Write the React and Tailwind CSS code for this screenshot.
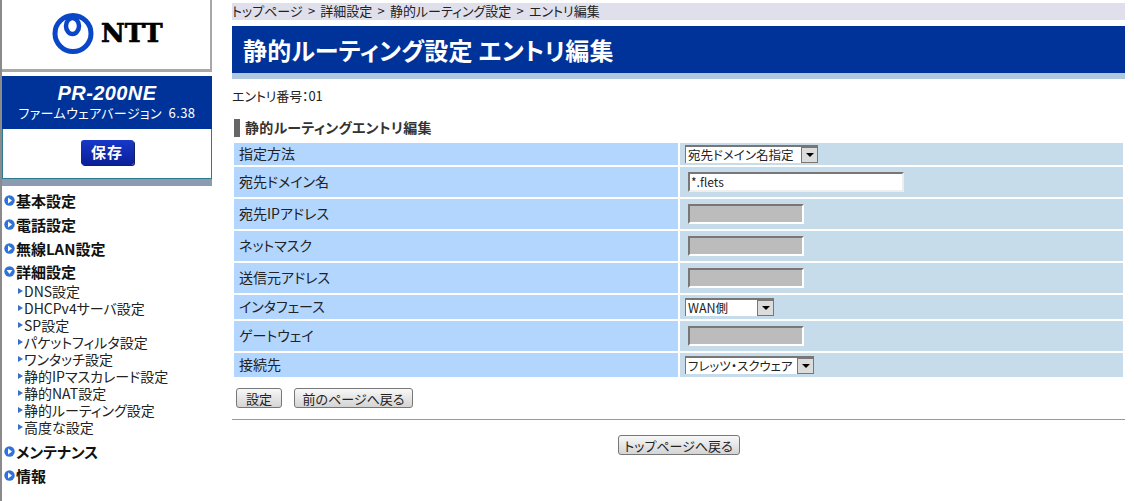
import React from "react";

const font = { fontFamily: '"Noto Sans CJK JP", "Liberation Sans", sans-serif' };

const mainMenu = ["基本設定", "電話設定", "無線LAN設定"];
const subMenu = [
  "DNS設定",
  "DHCPv4サーバ設定",
  "SP設定",
  "パケットフィルタ設定",
  "ワンタッチ設定",
  "静的IPマスカレード設定",
  "静的NAT設定",
  "静的ルーティング設定",
  "高度な設定",
];

function NttLogo() {
  return (
    <div className="flex items-center h-[66px] pl-[50px]">
      <svg width="42" height="41" viewBox="0 0 42 41">
        <circle cx="21" cy="20.5" r="18" fill="none" stroke="#0a46c8" strokeWidth="5" />
        <ellipse cx="20.5" cy="13" rx="6.5" ry="8" fill="none" stroke="#0a46c8" strokeWidth="4.5" />
      </svg>
      <span className="ml-[7px] text-[26px] leading-none font-black text-black [font-family:'DejaVu_Serif',serif] [-webkit-text-stroke:0.7px_black]">
        NTT
      </span>
    </div>
  );
}

function Bullet({ open }) {
  return (
    <svg width="11" height="11" viewBox="0 0 11 11" className="shrink-0">
      <circle cx="5.5" cy="5.5" r="5.2" fill="#2f72d8" />
      {open ? (
        <path d="M2.6 4 L8.4 4 L5.5 8 Z" fill="#fff" />
      ) : (
        <path d="M4 2.6 L8 5.5 L4 8.4 Z" fill="#fff" />
      )}
    </svg>
  );
}

function MainItem({ label, open, className }) {
  return (
    <div className={`flex items-center h-[23.67px] gap-px text-[15px] leading-none font-bold text-[#111] whitespace-nowrap ${className || ""}`}>
      <Bullet open={open} />
      <span>{label}</span>
    </div>
  );
}

function SubItem({ label }) {
  return (
    <div className="flex items-center h-[17px] pl-[14px] text-[14px] leading-none text-[#222] whitespace-nowrap">
      <span className="w-0 h-0 mr-px border-y-[3px] border-y-transparent border-l-[5px] border-l-[#3a70c8]" />
      <span>{label}</span>
    </div>
  );
}

function Sidebar() {
  return (
    <aside className="w-[212px] shrink-0 border-l-2 border-[#8a8a8a] h-[501px]">
      <div className="h-[72px] border-r-2 border-b-[3px] border-[#a8a8a8]">
        <NttLogo />
      </div>
      <div className="mt-1 h-[53px] bg-[#003399] text-white text-center">
        <div className="pt-[6px] text-[20px] leading-[22px] font-bold italic tracking-[0.4px] [font-family:'Liberation_Sans',sans-serif]">
          PR-200NE
        </div>
        <div className="text-[13px] leading-[17px] whitespace-nowrap tracking-[0.4px]">
          ファームウェアバージョン&nbsp;&nbsp;6.38
        </div>
      </div>
      <div className="h-[50px] flex items-center justify-center border-x border-b border-[#2a7a90] pb-[2px]">
        <div className="w-[53px] h-[25px] flex items-center justify-center rounded-[3px] bg-gradient-to-b from-[#1838c8] to-[#0a1f98] text-white text-[15px] font-bold tracking-[1px] shadow-[1px_1px_0_#102060]">
          保存
        </div>
      </div>
      <div className="h-[7px] bg-[#8c9cb0]" />
      <nav className="mt-[3px] pl-[2px]">
        {mainMenu.map((m) => (
          <MainItem key={m} label={m} />
        ))}
        <MainItem label="詳細設定" open />
        <div className="-mt-[1px]">
          {subMenu.map((s) => (
            <SubItem key={s} label={s} />
          ))}
        </div>
        <MainItem label="メンテナンス" className="mt-[4.5px]" />
        <MainItem label="情報" />
      </nav>
    </aside>
  );
}

function Row({ label, rowClass, children }) {
  return (
    <div className={`flex gap-[2px] ${rowClass}`}>
      <div className="w-[444px] bg-[#b3d6ff] flex items-center pl-[5px] pb-[2px] text-[14px] leading-none text-[#222]">{label}</div>
      <div className="w-[443px] bg-[#c6dcea] flex items-center">{children}</div>
    </div>
  );
}

function DisabledInput() {
  return (
    <div className="ml-[8px] w-[116px] h-[20px] bg-[#bcbcbc] border-2 border-t-[#777] border-l-[#777] border-r-white border-b-white" />
  );
}

function Select({ label, width }) {
  return (
    <div className={`ml-[5px] h-[18px] flex items-center justify-between bg-white border-t-2 border-l border-[#777] pl-[2px] text-[12.5px] text-[#222] ${width}`}>
      <span className="whitespace-nowrap leading-none">{label}</span>
      <span className="w-[17px] h-[16px] flex items-center justify-center bg-[#dcdcdc] border border-[#777]">
        <span className="w-0 h-0 border-x-[4px] border-x-transparent border-t-[4px] border-t-black" />
      </span>
    </div>
  );
}

function Btn({ children, className }) {
  return (
    <button className={`h-[20px] flex items-center justify-center rounded-[3px] border border-[#777] bg-gradient-to-b from-[#f8f8f8] to-[#d4d4d4] text-[13px] leading-none text-[#222] ${className}`}>
      {children}
    </button>
  );
}

export default function App() {
  return (
    <div className="flex w-[1134px] h-[501px] bg-white overflow-hidden [font-feature-settings:'palt']" style={font}>
      <Sidebar />
      <main className="ml-5 w-[893px] pt-[3px]">
        <div className="h-[17px] bg-[#e0e0ec] text-[13px] leading-[15px] text-[#222] whitespace-nowrap [word-spacing:2.3px]">
          トップページ &gt; 詳細設定 &gt; 静的ルーティング設定 &gt; エントリ編集
        </div>
        <div className="mt-[6px] h-[47px] bg-[#003399] flex items-center pl-[11px] text-[24px] leading-none font-bold text-white tracking-[0.25px]">
          静的ルーティング設定 エントリ編集
        </div>
        <div className="h-[6px] bg-[#b0c8de]" />
        <div className="mt-[8px] h-[18px] text-[13px] leading-[18px] text-[#222] tracking-[-0.1px]">エントリ番号：01</div>
        <div className="mt-[13px] ml-[2px] h-[20px] flex items-center gap-[5px] text-[14px] leading-none font-bold text-[#333] tracking-[0.3px]">
          <span className="w-[6px] h-[18px] bg-[#666]" />
          <span className="pb-[2px]">静的ルーティングエントリ編集</span>
        </div>
        <div className="mt-[5px] ml-[2px] flex flex-col gap-[2px]">
          <Row label="指定方法" rowClass="h-[22px]">
            <Select label="宛先ドメイン名指定" width="w-[133px]" />
          </Row>
          <Row label="宛先ドメイン名" rowClass="h-[30px]">
            <div className="ml-[8px] w-[216px] h-[20px] bg-white border-2 border-t-[#777] border-l-[#777] border-r-[#eee] border-b-[#eee] pl-px text-[12px] leading-[16px] text-[#222]">
              *.flets
            </div>
          </Row>
          <Row label="宛先IPアドレス" rowClass="h-[30px]">
            <DisabledInput />
          </Row>
          <Row label="ネットマスク" rowClass="h-[30px]">
            <DisabledInput />
          </Row>
          <Row label="送信元アドレス" rowClass="h-[30px]">
            <DisabledInput />
          </Row>
          <Row label="インタフェース" rowClass="h-[24px]">
            <Select label="WAN側" width="w-[89px]" />
          </Row>
          <Row label="ゲートウェイ" rowClass="h-[30px]">
            <DisabledInput />
          </Row>
          <Row label="接続先" rowClass="h-[24px]">
            <Select label="フレッツ・スクウェア" width="w-[129px]" />
          </Row>
        </div>
        <div className="mt-[11px] ml-[4px] flex gap-[12px]">
          <Btn className="w-[46px] border-[#2a7a90] from-[#e8f4fa] to-[#bcd8e4]">設定</Btn>
          <Btn className="w-[119px]">前のページへ戻る</Btn>
        </div>
        <div className="mt-[11px] h-px bg-[#999]" />
        <div className="mt-[15px] flex justify-center">
          <Btn className="w-[122px]">トップページへ戻る</Btn>
        </div>
      </main>
    </div>
  );
}
